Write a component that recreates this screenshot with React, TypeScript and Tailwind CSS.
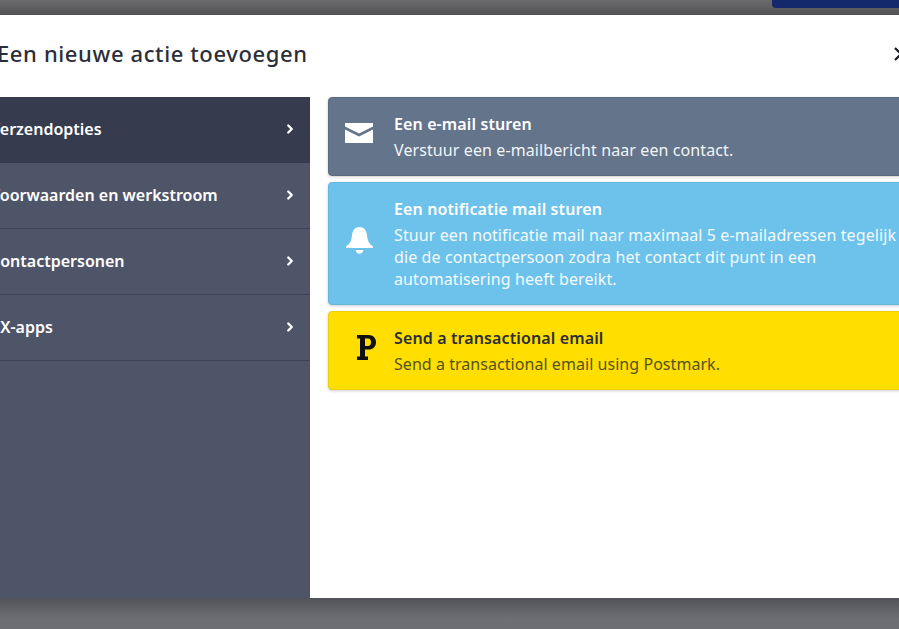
import { ChevronRight } from "lucide-react";

const groups = [
  { label: "Verzendopties", active: true },
  { label: "Voorwaarden en werkstroom" },
  { label: "Contactpersonen" },
  { label: "CX-apps" },
];

const MailIcon = () => (
  <svg width="28" height="20" viewBox="0 0 28 20" fill="white">
    <path d="M0 0H28V3.5L14 10.5L0 3.5Z" />
    <path d="M0 6.5L14 13.5L28 6.5V20H0Z" />
  </svg>
);

const BellIcon = () => (
  <svg width="27" height="27" viewBox="0 0 27 27" fill="white">
    <path d="M13.5 0C8.5 0 6.4 3.8 6 8.5C5.6 13.5 3.8 17 0 19.5V21H27V19.5C23.2 17 21.4 13.5 21 8.5C20.6 3.8 18.5 0 13.5 0Z" />
    <path d="M9.7 23H17.3C17 25.5 15.5 26.7 13.5 26.7C11.5 26.7 10 25.5 9.7 23Z" />
  </svg>
);

const PostmarkIcon = () => (
  <svg width="19" height="25" viewBox="0 0 19 25" fill="#111" className="ml-[15px]">
    <path
      fillRule="evenodd"
      d="M0 0H11.5C16 0 19 2.8 19 7.2C19 11.6 16 14.5 11.5 14.5H8V21.5H11V25H0V21.5H3V3.5H0ZM8 3.5V11H11C13 11 14 9.5 14 7.2C14 5 13 3.5 11 3.5Z"
    />
  </svg>
);

const actions = [
  {
    title: "Een e-mail sturen",
    lines: ["Verstuur een e-mailbericht naar een contact."],
    card: "bg-[#64748b] border-[#5c6b80] text-white",
    body: "text-[#f1f4f7] tracking-[0.1px]",
    icon: <MailIcon />,
  },
  {
    title: "Een notificatie mail sturen",
    lines: [
      "Stuur een notificatie mail naar maximaal 5 e-mailadressen tegelijk",
      "die de contactpersoon zodra het contact dit punt in een",
      "automatisering heeft bereikt.",
    ],
    card: "bg-[#6dc2eb] border-[#65b6de] text-white",
    body: "text-[#f3fafe] tracking-[0.1px]",
    icon: <BellIcon />,
  },
  {
    title: "Send a transactional email",
    lines: ["Send a transactional email using Postmark."],
    card: "bg-[#ffde00] border-[#ecce0a] text-[#2b2e38]",
    body: "text-[#55531f] tracking-[0.05px]",
    icon: <PostmarkIcon />,
  },
];

export default function App() {
  return (
    <div className="flex h-[629px] w-[899px] flex-col overflow-hidden bg-[#6d6e73] font-['Noto_Sans','Liberation_Sans',sans-serif]">
      {/* page behind the modal */}
      <div className="flex h-[15px] shrink-0 justify-end bg-gradient-to-b from-[#6c6c6e] to-[#525254]">
        <div className="h-[8px] w-[127px] rounded-bl bg-[#14296b]" />
      </div>

      {/* modal */}
      <div className="ml-[-24px] flex h-[583px] w-[960px] shrink-0 flex-col bg-white">
        <div className="flex h-[82px] shrink-0 items-center justify-between pb-[5px] pl-[21px] pr-[44px]">
          <h2 className="text-[22px] font-medium tracking-[0.62px] text-[#2b2e38]">Een nieuwe actie toevoegen</h2>
          <svg width="16" height="16" viewBox="0 0 16 16" fill="none" stroke="#15171c" strokeWidth="2.2" className="mr-[-17px]">
            <path d="M2 2L14 14M14 2L2 14" />
          </svg>
        </div>

        <div className="flex min-h-0 flex-1">
          <div className="w-[334px] shrink-0 bg-[#4f5569]">
            {groups.map((g) => (
              <div
                key={g.label}
                className={`flex h-[66px] items-center justify-between pb-[2px] pl-[14px] pr-[13px] ${g.active ? "bg-[#363b4d]" : "border-b border-[#3f4354]"}`}
              >
                <span className="text-[16px] font-semibold text-white">{g.label}</span>
                <ChevronRight size={14} strokeWidth={4} color="white" />
              </div>
            ))}
          </div>

          <div className="flex flex-1 flex-col gap-[6px] pl-[18px]">
            {actions.map((a) => (
              <div key={a.title} className={`flex w-[600px] items-center rounded border py-[14.5px] shadow-[0_1px_3px_rgba(0,0,0,0.2)] ${a.card}`}>
                <div className="mb-[7px] flex w-[60px] shrink-0 justify-center">{a.icon}</div>
                <div className="ml-[5px] min-w-0">
                  <div className="whitespace-nowrap text-[16px] font-semibold leading-[22px] tracking-[0.12px]">{a.title}</div>
                  <div className={`mt-[4px] whitespace-nowrap text-[16px] leading-[22px] ${a.body}`}>
                    {a.lines.map((l) => (
                      <div key={l}>{l}</div>
                    ))}
                  </div>
                </div>
              </div>
            ))}
          </div>
        </div>
      </div>

      <div className="h-[20px] shrink-0 bg-gradient-to-b from-[#525358] to-[#6d6e73]" />
    </div>
  );
}
